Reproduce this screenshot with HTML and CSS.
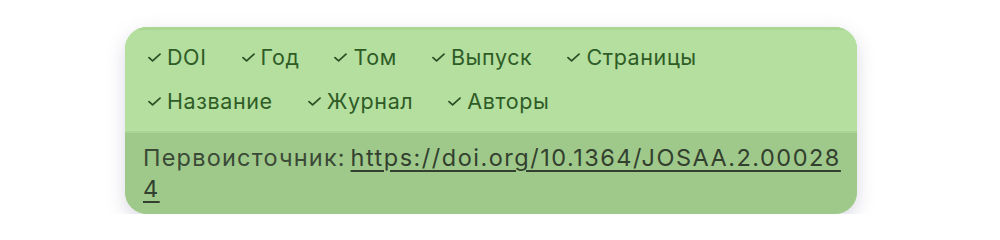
FILE: index.html
```html
<!DOCTYPE html>
<html lang="ru">
<head>
<meta charset="utf-8">
<link rel="stylesheet" href="styles.css">
</head>
<body>
<div class="page">
  <div class="card">
    <div class="tags">
      <div class="row">
        <span class="tag"><svg class="chk" viewBox="0 0 13 9"><polyline points="1,4.6 4.6,7.8 12,1.2"/></svg>DOI</span>
        <span class="tag"><svg class="chk" viewBox="0 0 13 9"><polyline points="1,4.6 4.6,7.8 12,1.2"/></svg>Год</span>
        <span class="tag"><svg class="chk" viewBox="0 0 13 9"><polyline points="1,4.6 4.6,7.8 12,1.2"/></svg>Том</span>
        <span class="tag"><svg class="chk" viewBox="0 0 13 9"><polyline points="1,4.6 4.6,7.8 12,1.2"/></svg>Выпуск</span>
        <span class="tag"><svg class="chk" viewBox="0 0 13 9"><polyline points="1,4.6 4.6,7.8 12,1.2"/></svg>Страницы</span>
      </div>
      <div class="row">
        <span class="tag"><svg class="chk" viewBox="0 0 13 9"><polyline points="1,4.6 4.6,7.8 12,1.2"/></svg>Название</span>
        <span class="tag"><svg class="chk" viewBox="0 0 13 9"><polyline points="1,4.6 4.6,7.8 12,1.2"/></svg>Журнал</span>
        <span class="tag"><svg class="chk" viewBox="0 0 13 9"><polyline points="1,4.6 4.6,7.8 12,1.2"/></svg>Авторы</span>
      </div>
    </div>
    <div class="source"><span class="label">Первоисточник:</span> <a class="link" href="#">https://doi.org/10.1364/JOSAA.2.000284</a></div>
  </div>
</div>
</body>
</html>
```
FILE: styles.css
```css
html, body {
  margin: 0;
  padding: 0;
  background: #ffffff;
}
.page {
  padding: 27px 0 0 125px;
}
.card {
  width: 732px;
  border-radius: 22px;
  overflow: hidden;
  background: #b3de9d;
  box-shadow: 0 6px 18px rgba(120, 110, 150, 0.28);
  font-family: Inter, "Noto Sans", sans-serif;
}
.tags {
  padding: 5px 20px 8px 23px;
  border-top: 3px solid #a9d692;
  background: #b4df9f;
}
.row {
  display: flex;
  gap: 35px;
  height: 44px;
  align-items: center;
}
.tag {
  display: flex;
  align-items: center;
  gap: 6px;
  font-size: 21.5px;
  color: #2f5c26;
  letter-spacing: 0.6px;
}
.chk {
  width: 13px;
  height: 9px;
  fill: none;
  stroke: #2f4f26;
  stroke-width: 1.8;
  stroke-linecap: round;
  stroke-linejoin: round;
}
.source {
  background: #9fc98a;
  border-top: 2px solid #abd596;
  padding: 9px 10px 10px 18px;
  font-size: 23.5px;
  line-height: 31px;
  letter-spacing: 1.2px;
  word-spacing: -3px;
  color: #3b4a36;
  word-break: break-all;
}
.link {
  color: #33402f;
  letter-spacing: 1.5px;
  text-decoration: underline;
  text-underline-offset: 4px;
  text-decoration-thickness: 2px;
}
```
